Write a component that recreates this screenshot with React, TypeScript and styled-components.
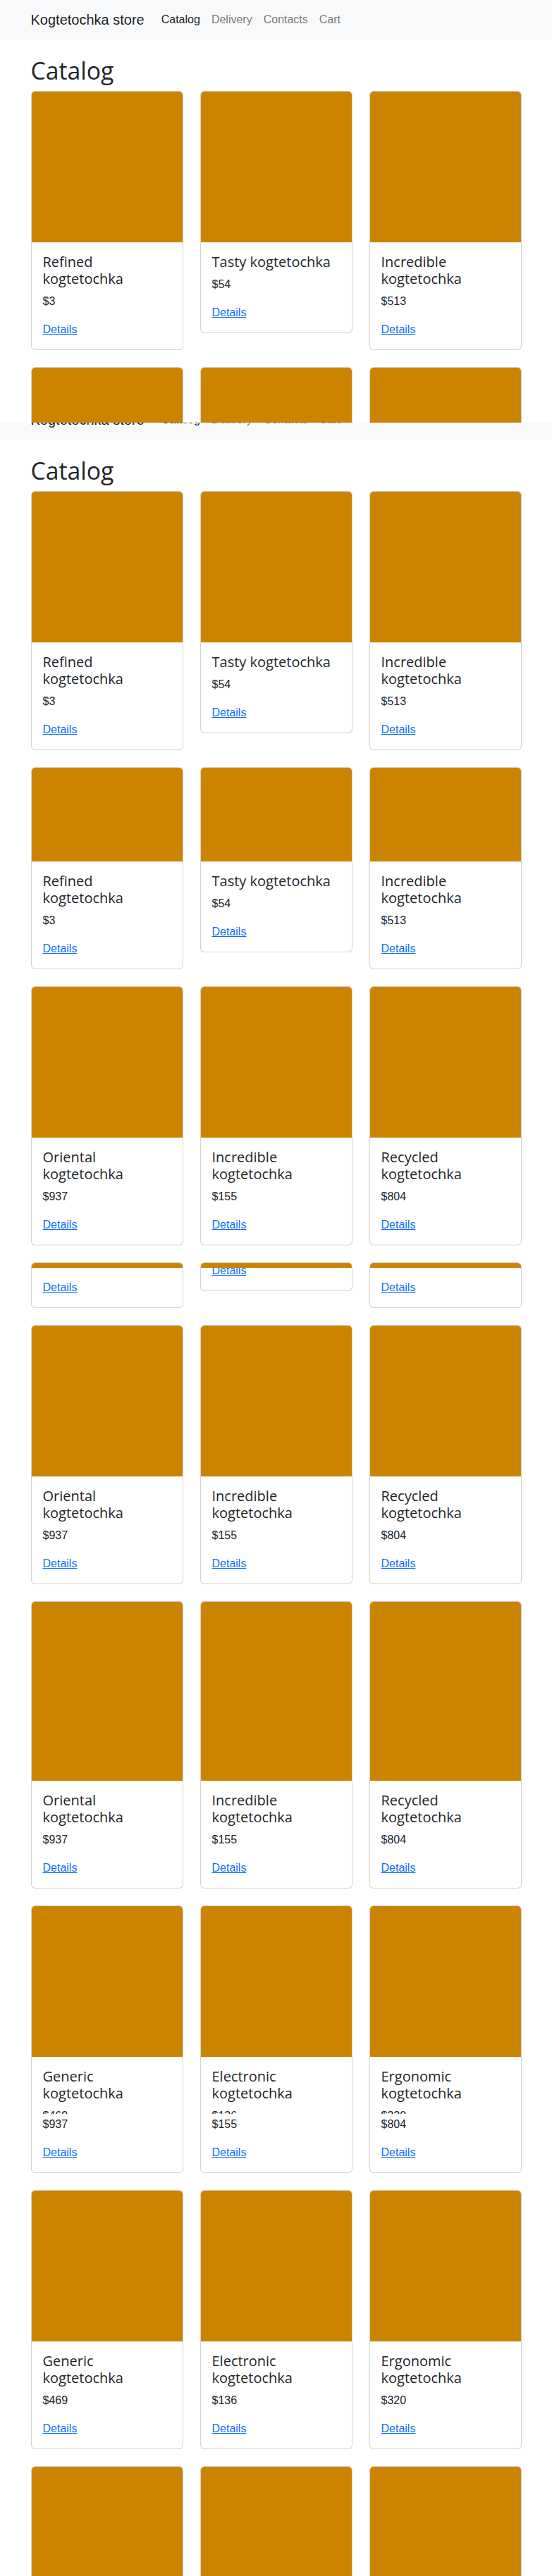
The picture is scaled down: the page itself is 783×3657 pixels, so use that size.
import React from 'react';
import styled, { createGlobalStyle } from 'styled-components';

const GlobalStyle = createGlobalStyle`
  *, *::before, *::after {
    box-sizing: border-box;
  }

  body {
    margin: 0;
    background: #fff;
    color: #212529;
    font-family: 'Liberation Sans', Arial, sans-serif;
    font-size: 16px;
    line-height: 1.5;
  }
`;

const headingFont = `'Open Sans', 'Noto Sans', sans-serif`;

const Container = styled.div`
  max-width: 720px;
  margin: 0 auto;
  padding: 0 12px;
`;

const Snapshot = styled.div<{ $height: number }>`
  height: ${(p) => p.$height}px;
  overflow: hidden;
`;

const NavClip = styled.div<{ $visible: number }>`
  height: ${(p) => p.$visible}px;
  overflow: hidden;
  display: flex;
  flex-direction: column;
  justify-content: flex-end;

  & > * {
    flex-shrink: 0;
  }
`;

const NavBar = styled.nav`
  background: #f8f9fa;
  padding: 8px 0;
`;

const NavInner = styled(Container)`
  display: flex;
  align-items: center;
`;

const Brand = styled.a`
  font-size: 20px;
  line-height: 30px;
  padding: 5px 0;
  margin-right: 16px;
  color: rgba(0, 0, 0, 0.9);
  text-decoration: none;
`;

const NavLink = styled.a<{ $active?: boolean }>`
  padding: 8px;
  font-size: 16px;
  line-height: 24px;
  color: ${(p) => (p.$active ? 'rgba(0, 0, 0, 0.9)' : 'rgba(0, 0, 0, 0.55)')};
  text-decoration: none;
`;

const PageTitle = styled.h1`
  margin: 24px 0 8px;
  font-family: ${headingFont};
  font-size: 33.75px;
  line-height: 40.5px;
  font-weight: 500;
`;

const Grid = styled.div`
  display: grid;
  grid-template-columns: repeat(3, 1fr);
  column-gap: 24px;
  align-items: start;
  margin-bottom: 24px;
`;

const Card = styled.div`
  border: 1px solid rgba(0, 0, 0, 0.175);
  border-radius: 6px;
  overflow: hidden;
  background: #fff;
`;

const CardImage = styled.div<{ $height: number }>`
  height: ${(p) => p.$height}px;
  background: #cc8400;
`;

const CardBody = styled.div<{ $clip?: number }>`
  padding: 16px;
  display: flex;
  flex-direction: column;
  ${(p) =>
    p.$clip !== undefined &&
    `
    height: ${p.$clip}px;
    overflow: hidden;
    justify-content: flex-end;
  `}

  & > * {
    flex-shrink: 0;
  }
`;

const CardTitle = styled.h5`
  margin: 0 0 8px;
  font-family: ${headingFont};
  font-size: 20px;
  line-height: 24px;
  font-weight: 500;
`;

const Price = styled.p`
  margin: 0 0 16px;
  line-height: 24px;
`;

const PriceSliver = styled.div`
  height: 9px;
  overflow: hidden;
  margin-bottom: 3px;

  & > p {
    margin: 0;
  }
`;

const DetailsLink = styled.a`
  align-self: flex-start;
  color: #0d6efd;
  line-height: 24px;
  text-decoration: underline;
`;

interface Item {
  title: string;
  price: string;
  sliver?: string;
}

interface Row {
  image: number;
  items: Item[];
  clip?: number[];
}

const firstRow: Item[] = [
  { title: 'Refined kogtetochka', price: '$3' },
  { title: 'Tasty kogtetochka', price: '$54' },
  { title: 'Incredible kogtetochka', price: '$513' }
];

const secondRow: Item[] = [
  { title: 'Oriental kogtetochka', price: '$937' },
  { title: 'Incredible kogtetochka', price: '$155' },
  { title: 'Recycled kogtetochka', price: '$804' }
];

const thirdRow: Item[] = [
  { title: 'Generic kogtetochka', price: '$469' },
  { title: 'Electronic kogtetochka', price: '$136' },
  { title: 'Ergonomic kogtetochka', price: '$320' }
];

// the scroll capture slipped here: a sliver of the next price sits above the old one
const glitchRow: Item[] = [
  { title: 'Generic kogtetochka', price: '$937', sliver: '$469' },
  { title: 'Electronic kogtetochka', price: '$155', sliver: '$136' },
  { title: 'Ergonomic kogtetochka', price: '$804', sliver: '$320' }
];

const topRows: Row[] = [
  { image: 214, items: firstRow },
  { image: 214, items: firstRow }
];

const scrolledRows: Row[] = [
  { image: 214, items: firstRow },
  { image: 133, items: firstRow },
  { image: 214, items: secondRow },
  { image: 7, items: secondRow, clip: [56, 32, 56] },
  { image: 214, items: secondRow },
  { image: 254, items: secondRow },
  { image: 214, items: glitchRow },
  { image: 214, items: thirdRow },
  { image: 214, items: thirdRow }
];

const ProductCard: React.FC<{ item: Item; image: number; clip?: number }> = ({
  item,
  image,
  clip
}) => (
  <Card>
    <CardImage $height={image} />
    <CardBody $clip={clip}>
      <CardTitle>{item.title}</CardTitle>
      {item.sliver && (
        <PriceSliver>
          <Price>{item.sliver}</Price>
        </PriceSliver>
      )}
      <Price>{item.price}</Price>
      <DetailsLink href="#">Details</DetailsLink>
    </CardBody>
  </Card>
);

const Header: React.FC = () => (
  <NavBar>
    <NavInner>
      <Brand href="#">Kogtetochka store</Brand>
      <NavLink href="#" $active>
        Catalog
      </NavLink>
      <NavLink href="#">Delivery</NavLink>
      <NavLink href="#">Contacts</NavLink>
      <NavLink href="#">Cart</NavLink>
    </NavInner>
  </NavBar>
);

const Catalog: React.FC<{ rows: Row[] }> = ({ rows }) => (
  <Container>
    <PageTitle>Catalog</PageTitle>
    {rows.map((row, r) => (
      <Grid key={r}>
        {row.items.map((item, i) => (
          <ProductCard
            key={i}
            item={item}
            image={row.image}
            clip={row.clip ? row.clip[i] : undefined}
          />
        ))}
      </Grid>
    ))}
  </Container>
);

const App: React.FC = () => (
  <>
    <GlobalStyle />
    <Snapshot $height={600}>
      <Header />
      <Catalog rows={topRows} />
    </Snapshot>
    <Snapshot $height={3057}>
      <NavClip $visible={24}>
        <Header />
      </NavClip>
      <Catalog rows={scrolledRows} />
    </Snapshot>
  </>
);

export default App;
